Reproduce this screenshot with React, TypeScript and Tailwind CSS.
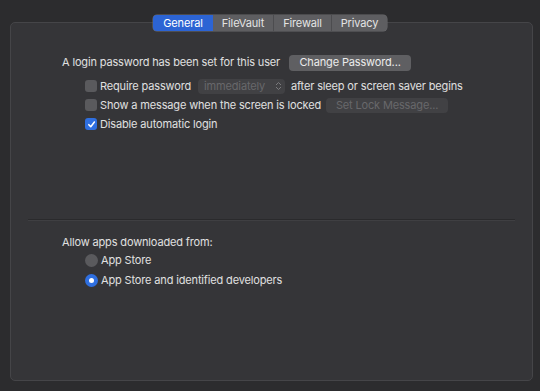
import React from "react";

const Check = ({ checked }: { checked?: boolean }) =>
  checked ? (
    <div className="w-[12px] h-[12px] rounded-[3px] bg-[#2f6fe0] flex items-center justify-center">
      <svg width="9" height="9" viewBox="0 0 10 10">
        <path d="M2 5.2 L4.2 7.4 L8.2 2.2" stroke="white" strokeWidth="1.7" fill="none" strokeLinecap="round" strokeLinejoin="round" />
      </svg>
    </div>
  ) : (
    <div className="w-[12px] h-[12px] rounded-[3px] bg-[#5a5a5d]" />
  );

const Radio = ({ on }: { on?: boolean }) =>
  on ? (
    <div className="w-[13px] h-[13px] rounded-full bg-[#2f6fe0] flex items-center justify-center">
      <div className="w-[5px] h-[5px] rounded-full bg-white" />
    </div>
  ) : (
    <div className="w-[13px] h-[13px] rounded-full bg-[#5a5a5d]" />
  );

export default function App() {
  const tabs: [string, string][] = [
    ["General", "w-[60px]"],
    ["FileVault", "w-[60px]"],
    ["Firewall", "w-[58px]"],
    ["Privacy", "w-[56px]"],
  ];
  return (
    <div
      className="w-[540px] h-[391px] bg-[#2c2c2e] text-[#e0e0e0] text-[11px] tracking-[-0.15px] pt-[15px] px-[10px] overflow-hidden"
      style={{ fontFamily: "Inter, 'Liberation Sans', sans-serif" }}
    >
      <div className="flex justify-center relative z-10">
        <div className="flex h-[16px] rounded-[4px] bg-[#5e5e61] overflow-hidden text-[11px] leading-[16px] shadow-[0_0_0_0.5px_#6a6a6d]">
          {tabs.map(([t, w], i) => (
            <div
              key={t}
              className={`${w} text-center ${i === 0 ? "bg-[#2c64d4] text-white" : "text-[#e4e4e4]"} ${i > 1 ? "border-l border-[#4c4c4f]" : ""}`}
            >
              {t}
            </div>
          ))}
        </div>
      </div>
      <div className="-mt-[9px] h-[359px] w-[523px] rounded-[5px] bg-[#353538] border border-[#454548] pt-[31px]">
        <div className="flex items-center pl-[51px] h-[17px]">
          <span>A login password has been set for this user</span>
          <div className="ml-[9px] h-[16px] w-[122px] rounded-[4px] bg-[#5f5f62] text-[#ececec] flex items-center justify-center">
            Change Password...
          </div>
        </div>
        <div className="pl-[74px] mt-[8px] flex flex-col gap-[5px]">
          <div className="flex items-center h-[14px]">
            <Check />
            <span className="ml-[3px]">Require password</span>
            <div className="ml-[7px] h-[15px] w-[87px] rounded-[4px] bg-[#414144] text-[#68686b] flex items-center justify-between pl-[6px] pr-[3px]">
              <span>immediately</span>
              <svg width="7" height="10" viewBox="0 0 7 10">
                <path d="M1 4 L3.5 1.5 L6 4 M1 6 L3.5 8.5 L6 6" stroke="#7a7a7d" strokeWidth="1" fill="none" />
              </svg>
            </div>
            <span className="ml-[6px]">after sleep or screen saver begins</span>
          </div>
          <div className="flex items-center h-[14px]">
            <Check />
            <span className="ml-[3px]">Show a message when the screen is locked</span>
            <div className="ml-[5px] h-[15px] w-[122px] rounded-[4px] bg-[#414144] text-[#68686b] flex items-center justify-center">
              Set Lock Message...
            </div>
          </div>
          <div className="flex items-center h-[14px]">
            <Check checked />
            <span className="ml-[3px]">Disable automatic login</span>
          </div>
        </div>
        <div className="mx-[17px] mt-[88px] h-[2px] bg-[#2a2a2c] border-b border-[#3f3f42]" />
        <div className="pl-[51px] mt-[13px]">Allow apps downloaded from:</div>
        <div className="pl-[74px] mt-[3px] flex flex-col gap-[6px]">
          <div className="flex items-center h-[14px]">
            <Radio />
            <span className="ml-[3px]">App Store</span>
          </div>
          <div className="flex items-center h-[14px]">
            <Radio on />
            <span className="ml-[3px]">App Store and identified developers</span>
          </div>
        </div>
      </div>
    </div>
  );
}
